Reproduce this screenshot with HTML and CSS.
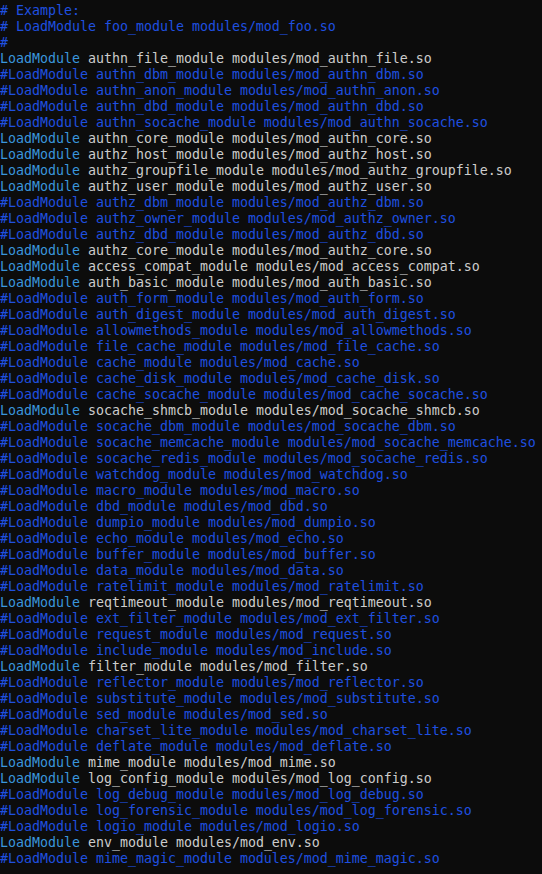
FILE: index.html
```html
<!DOCTYPE html>
<html lang="en">
<head>
<meta charset="utf-8">
<title>httpd.conf</title>
<link rel="stylesheet" href="styles.css">
</head>
<body>
<pre class="term"><span class="c"># Example:</span>
<span class="c"># LoadModule foo_module modules/mod_foo.so</span>
<span class="c">#</span>
<span class="k">LoadModule</span> authn_file_module modules/mod_authn_file.so
<span class="c">#LoadModule authn_dbm_module modules/mod_authn_dbm.so</span>
<span class="c">#LoadModule authn_anon_module modules/mod_authn_anon.so</span>
<span class="c">#LoadModule authn_dbd_module modules/mod_authn_dbd.so</span>
<span class="c">#LoadModule authn_socache_module modules/mod_authn_socache.so</span>
<span class="k">LoadModule</span> authn_core_module modules/mod_authn_core.so
<span class="k">LoadModule</span> authz_host_module modules/mod_authz_host.so
<span class="k">LoadModule</span> authz_groupfile_module modules/mod_authz_groupfile.so
<span class="k">LoadModule</span> authz_user_module modules/mod_authz_user.so
<span class="c">#LoadModule authz_dbm_module modules/mod_authz_dbm.so</span>
<span class="c">#LoadModule authz_owner_module modules/mod_authz_owner.so</span>
<span class="c">#LoadModule authz_dbd_module modules/mod_authz_dbd.so</span>
<span class="k">LoadModule</span> authz_core_module modules/mod_authz_core.so
<span class="k">LoadModule</span> access_compat_module modules/mod_access_compat.so
<span class="k">LoadModule</span> auth_basic_module modules/mod_auth_basic.so
<span class="c">#LoadModule auth_form_module modules/mod_auth_form.so</span>
<span class="c">#LoadModule auth_digest_module modules/mod_auth_digest.so</span>
<span class="c">#LoadModule allowmethods_module modules/mod_allowmethods.so</span>
<span class="c">#LoadModule file_cache_module modules/mod_file_cache.so</span>
<span class="c">#LoadModule cache_module modules/mod_cache.so</span>
<span class="c">#LoadModule cache_disk_module modules/mod_cache_disk.so</span>
<span class="c">#LoadModule cache_socache_module modules/mod_cache_socache.so</span>
<span class="k">LoadModule</span> socache_shmcb_module modules/mod_socache_shmcb.so
<span class="c">#LoadModule socache_dbm_module modules/mod_socache_dbm.so</span>
<span class="c">#LoadModule socache_memcache_module modules/mod_socache_memcache.so</span>
<span class="c">#LoadModule socache_redis_module modules/mod_socache_redis.so</span>
<span class="c">#LoadModule watchdog_module modules/mod_watchdog.so</span>
<span class="c">#LoadModule macro_module modules/mod_macro.so</span>
<span class="c">#LoadModule dbd_module modules/mod_dbd.so</span>
<span class="c">#LoadModule dumpio_module modules/mod_dumpio.so</span>
<span class="c">#LoadModule echo_module modules/mod_echo.so</span>
<span class="c">#LoadModule buffer_module modules/mod_buffer.so</span>
<span class="c">#LoadModule data_module modules/mod_data.so</span>
<span class="c">#LoadModule ratelimit_module modules/mod_ratelimit.so</span>
<span class="k">LoadModule</span> reqtimeout_module modules/mod_reqtimeout.so
<span class="c">#LoadModule ext_filter_module modules/mod_ext_filter.so</span>
<span class="c">#LoadModule request_module modules/mod_request.so</span>
<span class="c">#LoadModule include_module modules/mod_include.so</span>
<span class="k">LoadModule</span> filter_module modules/mod_filter.so
<span class="c">#LoadModule reflector_module modules/mod_reflector.so</span>
<span class="c">#LoadModule substitute_module modules/mod_substitute.so</span>
<span class="c">#LoadModule sed_module modules/mod_sed.so</span>
<span class="c">#LoadModule charset_lite_module modules/mod_charset_lite.so</span>
<span class="c">#LoadModule deflate_module modules/mod_deflate.so</span>
<span class="k">LoadModule</span> mime_module modules/mod_mime.so
<span class="k">LoadModule</span> log_config_module modules/mod_log_config.so
<span class="c">#LoadModule log_debug_module modules/mod_log_debug.so</span>
<span class="c">#LoadModule log_forensic_module modules/mod_log_forensic.so</span>
<span class="c">#LoadModule logio_module modules/mod_logio.so</span>
<span class="k">LoadModule</span> env_module modules/mod_env.so
<span class="c">#LoadModule mime_magic_module modules/mod_mime_magic.so</span></pre>
</body>
</html>
```
FILE: styles.css
```css
html, body {
  margin: 0;
  padding: 0;
  background: #0c0c0c;
  height: 100%;
}
.term {
  margin: 0;
  padding: 3px 0 0 0;
  font-family: "DejaVu Sans Mono", "Liberation Mono", monospace;
  font-size: 13.29px;
  line-height: 16px;
  color: #cccccc;
  white-space: pre;
  overflow: hidden;
}
.c {
  color: #1f50e0;
}
.k {
  color: #3a96dd;
}
```
